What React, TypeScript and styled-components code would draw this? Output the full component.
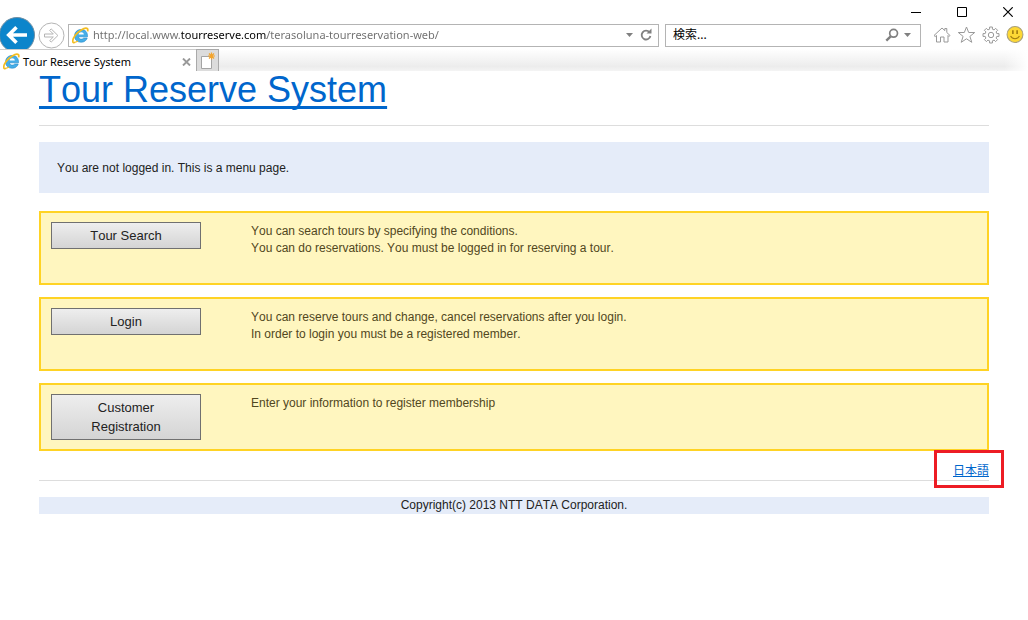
import React from 'react';
import styled, { createGlobalStyle, css } from 'styled-components';

const GlobalStyle = createGlobalStyle`
  *, *::before, *::after { box-sizing: border-box; }
  body {
    margin: 0;
    background: #fff;
    color: #222;
    font: 12px/17px "Liberation Sans", Arial, "Noto Sans CJK JP", sans-serif;
    font-kerning: none;
  }
`;

const chromeFont = css`
  font-family: "Noto Sans", "Noto Sans CJK JP", sans-serif;
  font-size: 11px;
  line-height: 18px;
`;

const Chrome = styled.header`
  ${chromeFont}
  background: #fff;
`;

const IconButton = styled.button`
  display: flex;
  align-items: center;
  justify-content: center;
  flex: none;
  padding: 0;
  border: 0;
  background: none;
  color: #808080;
  svg { display: block; }
`;

const CaptionRow = styled.div`
  display: flex;
  justify-content: flex-end;
  gap: 26px;
  height: 24px;
  padding-right: 10px;
`;

const CaptionButton = styled(IconButton)`
  width: 20px;
`;

const AddressRow = styled.div`
  display: flex;
  align-items: center;
  height: 22px;
  padding-right: 4px;
`;

const BackButton = styled(IconButton)`
  margin: -7px 3px -7px -1px;
`;

const ForwardButton = styled(IconButton)`
  margin: -4px 3px -4px 0;
`;

const Field = styled.div`
  display: flex;
  align-items: center;
  min-width: 0;
  height: 23px;
  border: 1px solid #b4b4b4;
  background: #fff;
`;

const AddressField = styled(Field)`
  flex: 1;
  gap: 4px;
  margin-right: 6px;
  padding: 0 3px;
`;

const SearchField = styled(Field)`
  flex: 0 1 256px;
  gap: 5px;
  margin-right: 12px;
  padding: 0 9px 0 7px;
`;

const TextInput = styled.input`
  ${chromeFont}
  flex: 1;
  min-width: 0;
  padding: 0;
  border: 0;
  outline: 0;
  background: none;
  color: #000;
`;

const SearchInput = styled(TextInput)`
  font-size: 12px;
  &::placeholder { color: #000; opacity: 1; }
`;

/* The host part of the address stands out in black. */
const UrlInput = styled(TextInput)`
  color: #6d6d6d;
  background: linear-gradient(to right, #6d6d6d 88px, #000 88px, #000 174px, #6d6d6d 174px);
  -webkit-background-clip: text;
  background-clip: text;
  -webkit-text-fill-color: transparent;
`;

const Tools = styled.div`
  display: flex;
  gap: 6px;
`;

const TabRow = styled.div`
  display: flex;
  height: 22px;
  margin-top: 3px;
  background:
    linear-gradient(to left, #fff, transparent 24px),
    linear-gradient(#fff, #ececec 80%, #f4f4f4);
`;

const Tab = styled.div`
  display: flex;
  align-items: center;
  gap: 3px;
  width: 196px;
  padding: 2px 5px 0 3px;
  border-top: 1px solid #ccc;
  background: #fff;
  color: #000;
`;

const TabTitle = styled.span`
  flex: 1;
  white-space: nowrap;
`;

const NewTab = styled(IconButton)`
  width: 23px;
  border: 1px solid #aaa;
  border-bottom: 0;
  background: #dcdcdc;
`;

const Page = styled.main`
  width: min(950px, 100% - 32px);
  margin: 0 auto;
`;

const SiteTitle = styled.h1`
  margin: 0;
  font-size: 36px;
  font-weight: 400;
  line-height: 37px;
`;

const Link = styled.a`
  color: #0066cc;
`;

const TitleLink = styled(Link)`
  text-decoration-thickness: 3px;
  text-decoration-skip-ink: none;
  text-underline-offset: 4px;
`;

const Rule = styled.hr`
  height: 1px;
  margin: 17px 0 16px;
  border: 0;
  background: #ddd;
`;

const FooterRule = styled(Rule)`
  margin-top: 0;
`;

const Notice = styled.p`
  margin: 0 0 18px;
  padding: 18px 18px 16px;
  background: #e5ecf9;
`;

const MenuCard = styled.section`
  display: grid;
  grid-template-columns: 150px 1fr;
  column-gap: 50px;
  align-items: start;
  margin-bottom: 12px;
  padding: 9px 10px;
  border: 2px solid #ffd324;
  background: #fff6bf;
  color: #514721;
`;

const MenuButton = styled.button`
  padding: 3px 24px;
  border: 1px solid #707070;
  background: linear-gradient(#eee, #d4d4d4);
  color: #222;
  font: 13px/19px "Liberation Sans", Arial, sans-serif;
  font-kerning: none;
`;

const Description = styled.p<{ $spaced: boolean }>`
  margin: 0 0 ${(p) => (p.$spaced ? 17 : 0)}px;
  padding-top: 1px;
`;

const LanguageBar = styled.nav`
  display: flex;
  justify-content: flex-end;
`;

const Language = styled.div`
  position: relative;
`;

const Highlight = styled.div`
  position: absolute;
  inset: -13px -15px -8px -19px;
  border: 3px solid #ed1c24;
  pointer-events: none;
`;

const Copyright = styled.footer`
  background: #e5ecf9;
  text-align: center;
`;

const BrowserLogo = () => (
  <svg width="17" height="17" viewBox="0 0 17 17" fill="none" aria-hidden="true">
    <path d="M15.500 9.800H6.600c.1 1.400 1.100 2.300 2.700 2.300 1.100 0 1.900-.4 2.300-1.100h3.600c-.8 2.700-3 4.200-6 4.200-4 0-6.600-2.400-6.600-6.200 0-3.900 2.600-6.500 6.600-6.500 4.100 0 6.600 2.700 6.300 7.300Z" fill="#45aee8" stroke="#2287c8" strokeWidth=".6" />
    <path d="M6.600 7.500h5.200C11.700 6.100 10.700 5.200 9.200 5.200S6.800 6.100 6.600 7.500Z" fill="#fff" />
    <path d="M3.200 15.300C-.3 17 .2 12.400 3.100 8.500 6.400 4.100 12.300.400 14.900 1.400c1.100.4 1.100 1.600.6 3" stroke="#f4bd20" strokeWidth="1.700" />
    <path d="M3.100 15.300c1-.3 2-.8 2.900-1.400" stroke="#f4bd20" strokeWidth="1.200" />
  </svg>
);

const DownArrow = () => (
  <svg width="7" height="4" viewBox="0 0 7 4" aria-hidden="true">
    <path d="M0 0h7L3.500 4Z" fill="#808080" />
  </svg>
);

const items = [
  {
    label: 'Tour Search',
    lines: [
      'You can search tours by specifying the conditions.',
      'You can do reservations. You must be logged in for reserving a tour.',
    ],
  },
  {
    label: 'Login',
    lines: [
      'You can reserve tours and change, cancel reservations after you login.',
      'In order to login you must be a registered member.',
    ],
  },
  { label: 'Customer Registration', lines: ['Enter your information to register membership'] },
];

export default function App() {
  return (
    <>
      <GlobalStyle />
      <Chrome>
        <CaptionRow>
          <CaptionButton aria-label="Minimize">
            <svg width="10" height="11" viewBox="0 0 10 11"><path d="M0 5.500h10" stroke="#000" /></svg>
          </CaptionButton>
          <CaptionButton aria-label="Maximize">
            <svg width="10" height="10" viewBox="0 0 10 10"><path d="M.5.500h9v9h-9Z" stroke="#000" fill="none" /></svg>
          </CaptionButton>
          <CaptionButton aria-label="Close">
            <svg width="10" height="10" viewBox="0 0 10 10"><path d="m.3.300 9.400 9.400M9.700.300.300 9.700" stroke="#000" strokeWidth="1.200" /></svg>
          </CaptionButton>
        </CaptionRow>
        <AddressRow>
          <BackButton aria-label="Back">
            <svg width="36" height="36" viewBox="0 0 36 36">
              <circle cx="18" cy="18" r="17.500" fill="#0c85cb" stroke="#6f8ea3" />
              <path d="M28 18H10M17.500 10.200 9.700 18l7.800 7.800" fill="none" stroke="#fff" strokeWidth="3.600" />
            </svg>
          </BackButton>
          <ForwardButton aria-label="Forward">
            <svg width="27" height="27" viewBox="0 0 27 27" fill="none" stroke="#b4b4b4">
              <circle cx="13.500" cy="13.500" r="12.500" fill="#fff" />
              <path d="M6.500 12h8.800l-3.600-3.600 1.500-1.500 6.700 6.600-6.700 6.600-1.500-1.500 3.600-3.600H6.500Z" />
            </svg>
          </ForwardButton>
          <AddressField>
            <BrowserLogo />
            <UrlInput aria-label="Address" defaultValue="http://local.www.tourreserve.com/terasoluna-tourreservation-web/" />
            <IconButton aria-label="Show addresses"><DownArrow /></IconButton>
            <IconButton aria-label="Refresh">
              <svg width="18" height="14" viewBox="0 0 18 14" fill="none">
                <path d="M12.500 4.300A4.400 4.400 0 1 0 13.400 8" stroke="#808080" strokeWidth="1.800" />
                <path d="M9.500 5.500h5V.500Z" fill="#808080" />
              </svg>
            </IconButton>
          </AddressField>
          <SearchField>
            <SearchInput aria-label="Search" placeholder="検索..." />
            <IconButton aria-label="Search">
              <svg width="14" height="14" viewBox="0 0 14 14" fill="none" stroke="#808080">
                <circle cx="8.600" cy="5.300" r="3.900" strokeWidth="1.700" />
                <path d="M5.700 8.300 1.300 12.700" strokeWidth="2.400" />
              </svg>
            </IconButton>
            <IconButton aria-label="Search options"><DownArrow /></IconButton>
          </SearchField>
          <Tools>
            <IconButton aria-label="Home">
              <svg width="18" height="18" viewBox="0 0 18 18" fill="none" stroke="#999">
                <path d="m1 9.500 8-7.500 2.800 2.600V2.500h2v4L17 9.500l-1 1-1-1v6.500h-4v-5H7.500v5H3.500V9.500l-1.300 1Z" />
              </svg>
            </IconButton>
            <IconButton aria-label="Favorites">
              <svg width="19" height="18" viewBox="0 0 19 18" fill="none" stroke="#999">
                <path d="m9.500 1 2.200 5.500h6l-4.800 3.900 1.900 5.900-5.300-3.500-5.300 3.500 1.900-5.900-4.800-3.900h6Z" />
              </svg>
            </IconButton>
            <IconButton aria-label="Tools">
              <svg width="18" height="18" viewBox="0 0 18 18" fill="none" stroke="#999">
                <path d="M7.600 1h2.800v2.200l1.700.7 1.500-1.600 2 2-1.500 1.600.7 1.700H17v2.800h-2.200l-.7 1.700 1.500 1.500-2 2-1.500-1.500-1.700.7V17H7.600v-2.200l-1.700-.7-1.500 1.500-2-2 1.500-1.500-.7-1.700H1V7.600h2.200l.7-1.700-1.500-1.600 2-2 1.500 1.600 1.700-.7Z" />
                <circle cx="9" cy="9" r="2.700" />
              </svg>
            </IconButton>
            <IconButton aria-label="Send a smile">
              <svg width="18" height="18" viewBox="0 0 17 17" fill="none">
                <circle cx="8.500" cy="8" r="7.500" fill="#fdd835" stroke="#a9a07c" />
                <path d="M6.500 4v3.500M10.500 4v3.500" stroke="#a07c10" strokeWidth="1.500" />
                <path d="M4.300 9.500c1.800 3.300 6.600 3.300 8.400 0" stroke="#a07c10" />
              </svg>
            </IconButton>
          </Tools>
        </AddressRow>
        <TabRow>
          <Tab>
            <BrowserLogo />
            <TabTitle>Tour Reserve System</TabTitle>
            <IconButton aria-label="Close tab">
              <svg width="9" height="8" viewBox="0 0 9 8"><path d="m1 .5 7 7M8 .500l-7 7" stroke="#999" strokeWidth="1.900" /></svg>
            </IconButton>
          </Tab>
          <NewTab aria-label="New tab">
            <svg width="19" height="18" viewBox="0 0 19 18" fill="none">
              <path d="M3.500 4.500h10v12h-10Z" fill="#fff" stroke="#a4a4a4" />
              <path d="M13.500.500v7M10 4h7M11 1.500l5 5M16 1.500l-5 5" stroke="#f3a42c" strokeWidth="1.200" />
            </svg>
          </NewTab>
        </TabRow>
      </Chrome>
      <Page>
        <SiteTitle><TitleLink href="#">Tour Reserve System</TitleLink></SiteTitle>
        <Rule />
        <Notice>You are not logged in. This is a menu page.</Notice>
        {items.map((item) => (
          <MenuCard key={item.label}>
            <MenuButton>{item.label}</MenuButton>
            <Description $spaced={item.lines.length > 1}>
              {item.lines.map((line, i) => (
                <React.Fragment key={line}>
                  {i > 0 && <br />}
                  {line}
                </React.Fragment>
              ))}
            </Description>
          </MenuCard>
        ))}
        <LanguageBar>
          <Language>
            <Link href="#" lang="ja">日本語</Link>
            <Highlight />
          </Language>
        </LanguageBar>
        <FooterRule />
        <Copyright>Copyright(c) 2013 NTT DATA Corporation.</Copyright>
      </Page>
    </>
  );
}
